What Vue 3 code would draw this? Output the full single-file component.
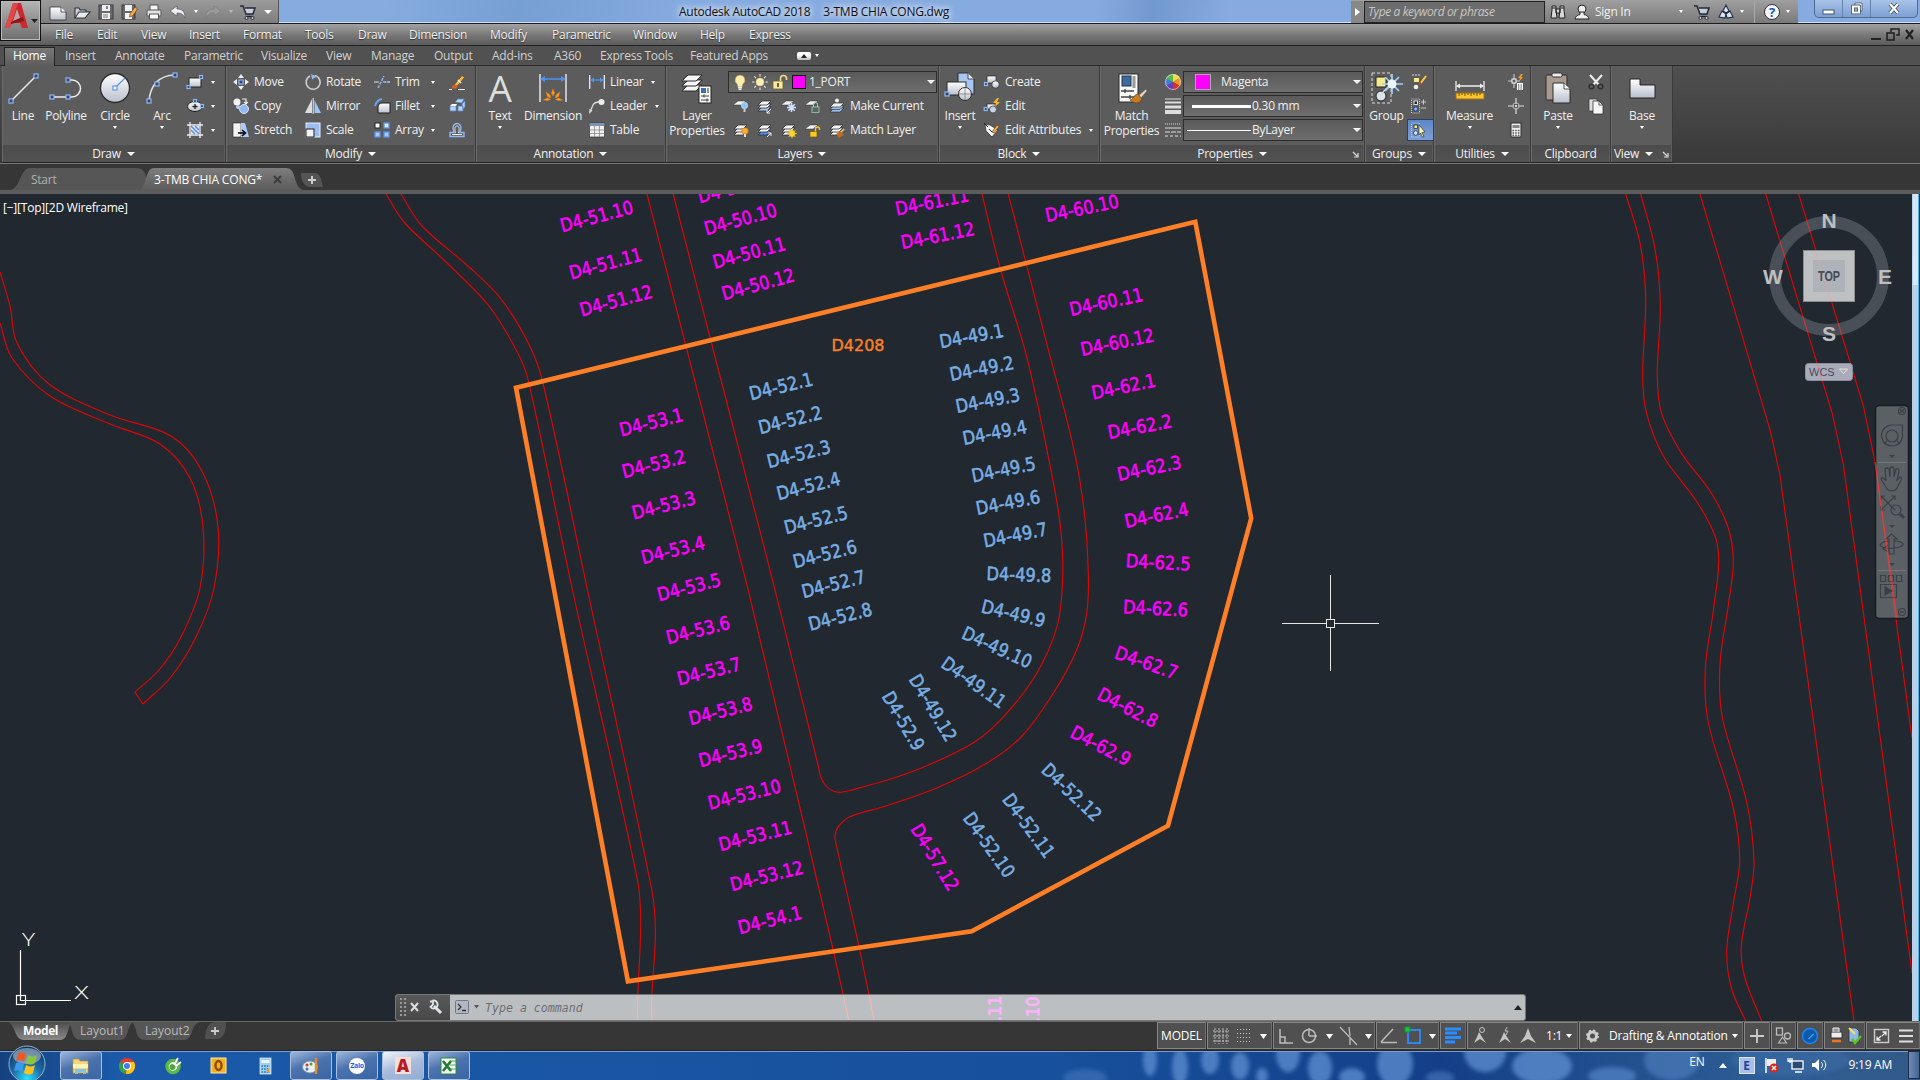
<script setup>
import { h } from 'vue'

const B = '#8fb8f5'
const sq = (x, y, s = 4) =>
  `<rect x="${x - s / 2}" y="${y - s / 2}" width="${s}" height="${s}" fill="#33456b" stroke="${B}" stroke-width="1.2"/>`
const stack = (c = '#f4f4f4', d = '#f4f4f4') =>
  [9, 6, 3].map((y, i) => `<path d="M1 ${y + 4}l4-4h9l-4 4z" fill="${i ? c : d}" stroke="#333" stroke-width=".8"/>`).join('')
const sheet = '<path d="M0 7l5-4h8l-5 4z" fill="#f2f2f2" stroke="#333" stroke-width=".5"/>'

const icons = {
  line: `<path d="M4 29L29 4" stroke="#eee" stroke-width="1.5"/>${sq(4, 29)}${sq(29, 4)}`,
  polyline: `<path d="M2 25H22a8.500 8.500 0 0 0 0-17h-4" fill="none" stroke="#eee" stroke-width="1.5"/>${sq(2, 25)}${sq(18, 25)}${sq(18, 8)}`,
  circle: `<circle cx="16" cy="16" r="14.500" fill="url(#gBall)" stroke="#2c2c2c" stroke-width="1.3"/><path d="M16 16L26 6" stroke="#5a94ee" stroke-width="1.3"/><rect x="14" y="14" width="4" height="4" fill="#fff" stroke="#5a94ee" stroke-width="1.2"/>`,
  arc: `<path d="M3 29C4 14 13 3 29 3" fill="none" stroke="#ddd" stroke-width="1.6"/>${sq(3, 29)}${sq(11, 12)}${sq(29, 3)}`,
  rect: `<rect x="2" y="4" width="12" height="9" fill="url(#gBall)" stroke="#222"/>${sq(14, 3, 3)}${sq(1.5, 13, 3)}`,
  ellipse: `<ellipse cx="8" cy="8.500" rx="7.500" ry="5" fill="url(#gBall)" stroke="#222"/><path d="M8 6v5M5.500 8.500h5" stroke="#222" stroke-width="1.300"/>${sq(8, 3, 3)}${sq(15, 8, 3)}`,
  hatch: `<path d="M3 0v16M13 0v16M0 3h16M0 13h16" stroke="#eee" stroke-width="1.300"/><rect x="4" y="4" width="8" height="8" fill="#dfe8fa"/><path d="M4 8l4 4M4 4l8 8M8 4l4 4" stroke="#5b8be0" stroke-width="1.500"/>`,
  move: `<path d="M8 0l3 4H5zM8 16l3-4H5zM0 8l4-3v6zM16 8l-4-3v6z" fill="#eee"/>${sq(8, 8, 4)}`,
  rotate: `<path d="M10 1.500A7 7 0 1 1 5 2" fill="none" stroke="#ccc" stroke-width="1.600"/><path d="M6 0l6 2.500-5 3z" fill="${B}"/>`,
  trim: `<path d="M0 8h5M11 8h1.500M14 8h2" stroke="#ddd" stroke-width="1.200"/><path d="M4 14L10 2M9 8h7" stroke="${B}" stroke-width="1.400" stroke-dasharray="3 1"/>`,
  erase: `<path d="M5 11L13 1.500l2.500 2L8.500 12z" fill="#f2b645" stroke="#5a3c10" stroke-width=".6"/><path d="M9 6l3 3" stroke="#fff" stroke-width="1.500"/><path d="M3 14c0-3 2-4 4-3l1.500 1.500C8 15 5 15 3 14z" fill="#e05a22"/><path d="M0 15.500h3M9 15.500h7" stroke="#eee"/>`,
  copy: `<circle cx="4" cy="4" r="3.500" fill="#f2f2f2"/><circle cx="11" cy="11" r="4.500" fill="${B}" stroke="#dbe7fb"/><path d="M9 1h4v4M11 4l2 2 2-2" fill="none" stroke="#eee" stroke-width="1.200"/><circle cx="5" cy="9" r="2" fill="#b9cdf0"/>`,
  mirror: `<path d="M7 1v14H0z" fill="#ddd"/><path d="M9.500 2v13H16z" fill="#9fc2f7"/><path d="M8.200 0v16" stroke="#eee" stroke-width="1"/>`,
  fillet: `<path d="M4 15V9c0-3 2-4 4-4h8v10z" fill="url(#gBall)" stroke="#222"/><path d="M1 8c1-4 3-6 7-7" fill="none" stroke="#6ba1f2" stroke-width="2"/>`,
  explode: `<path d="M1 8h6v5H1zM9 8h5v5H9zM6 4l3-3h6l-2 4zM13 6l3-3v6l-2 2z" fill="#b9d3f5" stroke="#5c86c4" stroke-width=".8"/><path d="M1 8l2-2h5L7 8z" fill="#fff"/>`,
  stretch: `<path d="M0 1h8v14H0z" fill="#f5f5f5" stroke="#222" stroke-width=".6"/><path d="M8 1h4l4 14H8z" fill="#a9cbf7"/><path d="M5 11h6M9 8l3.500 3L9 14" fill="none" stroke="#000" stroke-width="1.500"/>`,
  scale: `<rect x="1" y="1" width="14" height="14" fill="#9dbdf0" stroke="#e6eefc"/><rect x="1" y="7" width="8" height="8" fill="#f2f2f2" stroke="#222"/>`,
  array: `<rect x="1" y="1" width="5" height="5" fill="#fff" stroke="#222"/><rect x="10" y="1" width="5" height="5" fill="#dfeaff" stroke="#5a94ee" stroke-width="1.300"/><rect x="1" y="10" width="5" height="5" fill="#a9c8f7" stroke="#5a94ee" stroke-width="1.300"/><rect x="10" y="10" width="5" height="5" fill="#a9c8f7" stroke="#5a94ee" stroke-width="1.300"/>`,
  offset: `<path d="M1 14.500h14v-4h-4c2-4 1-9-3-9s-5 5-3 9H1z" fill="none" stroke="#8fb8f5" stroke-width="1.400"/><path d="M3 12.500h10M6.500 11C5.500 8 5.500 4 8 4s2.500 4 1.500 7" fill="none" stroke="#eee"/>`,
  dimension: `<path d="M3 2v28M29 2v28" stroke="#eee" stroke-width="1.400"/><path d="M4 7h24" stroke="#4f90f0" stroke-width="1.600"/><path d="M3 7l5-3v6zM29 7l-5-3v6z" fill="#4f90f0"/><path d="M16 17l1.500 4-1.500 3-1.500-3zM9 20l4 3 .5 3-3-1.500zM23 20l-4 3-.5 3 3-1.500zM6.500 28l4-2 3 1.500-3 1zM25.500 28l-4-2-3 1.500 3 1z" fill="#f7a823" stroke="#e2761b" stroke-width=".7"/>`,
  linear: `<path d="M.7 1v14M15.300 1v14" stroke="#eee" stroke-width="1.300"/><path d="M2 6h12" stroke="#4f90f0" stroke-width="1.300"/><path d="M1 6l4-2.500v5zM15 6l-4-2.500v5z" fill="#4f90f0"/>`,
  leader: `<path d="M1 14L4 7c1-2 3-3 6-3" fill="none" stroke="#ddd" stroke-width="1.300"/><path d="M0 16l.5-5 3 1.500z" fill="#ddd"/><circle cx="12.500" cy="4" r="3" fill="#eee"/>`,
  table: `<rect x=".5" y="1" width="15" height="14" fill="#f0f0f0" stroke="#333" stroke-width=".7"/><path d="M.5 1h15v3H.5z" fill="#7f93b4"/><path d="M.5 8h15M.5 11.500h15M5.500 4v11M10.500 4v11" stroke="#8a8a8a" stroke-width=".8"/>`,
  layerprops: `${[14, 9, 4].map((y) => `<path d="M1 ${y + 5}l6-6h14l-6 6z" fill="#f6f6f6" stroke="#2c2c2c"/>`).join('')}<rect x="18" y="14" width="12" height="17" fill="#fafafa" stroke="#222"/><rect x="20" y="16" width="5" height="5" fill="#3f6db3"/><path d="M27 16v5M20 24h8M20 28h8M23 22.500v3M26 26.500v3" stroke="#444" stroke-width="1.100"/>`,
  la1: `${sheet}<circle cx="11.500" cy="7.500" r="3.200" fill="#8ec3fa" stroke="#d9ecff" stroke-width=".6"/><path d="M11.500 11v3" stroke="#ccc" stroke-width="2"/>`,
  la2: `${stack('#f4f4f4', '#9cc2f5')}<path d="M14 11l-4 4M10 12v3h3" stroke="#eee" fill="none"/>`,
  la3: `${sheet}<path d="M10.500 5v9M6 9.500h9M7.300 6.300l6.400 6.400M13.700 6.300l-6.400 6.400" stroke="#cfe2fd" stroke-width="1.600"/>`,
  la4: `${sheet}<rect x="7" y="9" width="7" height="5.500" fill="#52695f" stroke="#a9c9ba" stroke-width=".8"/><path d="M8.500 9V6.500a2 2 0 0 1 4 0V9" fill="none" stroke="#a9c9ba"/>`,
  la5: `${[10, 7.500, 5].map((y, i) => `<path d="M1 ${y + 4}l4-4h10l-4 4z" fill="${i > 1 ? '#f0f0f0' : '#9cc2f5'}" stroke="#333" stroke-width=".7"/>`).join('')}<circle cx="8" cy="2.500" r="2" fill="#eee"/>`,
  lb1: `${stack()}<circle cx="12" cy="9" r="3.200" fill="#f9b233" stroke="#e0761a" stroke-width=".8"/><path d="M12 12v3" stroke="#ddd" stroke-width="2"/>`,
  lb2: `${stack('#f4f4f4', '#4f8df0')}<path d="M10 15l4-4M11 11h3v3" stroke="#eee" fill="none"/>`,
  lb3: `${stack()}<circle cx="11" cy="11.500" r="3" fill="#ffe23a" stroke="#e9b61c"/><path d="M11 6.500v10M6 11.500h10M7.500 8l7 7M14.500 8l-7 7" stroke="#f7d327" stroke-width=".8"/>`,
  lb4: `${sheet}<rect x="5" y="9.500" width="7" height="5.500" fill="#f9c723" stroke="#6b5108" stroke-width=".6"/><path d="M10.500 9.500V7a2 2 0 0 1 4 0v1" fill="none" stroke="#f9c723" stroke-width="1.400"/>`,
  lb5: `${stack()}<path d="M7 12l5-3 3 4-5 3z" fill="#c26a1d"/><path d="M12 10l3-3" stroke="#f4d28a" stroke-width="1.500"/>`,
  bulb: `<path d="M8 1a5 5 0 0 1 3 9l-.7 3H5.700L5 10a5 5 0 0 1 3-9z" fill="#fdeeb0" stroke="#8f7d3a" stroke-width=".6"/><path d="M6 13.500h4M6.500 15.300h3" stroke="#eee" stroke-width="1.400"/>`,
  sun: `<circle cx="8" cy="8" r="4" fill="#fff1b5" stroke="#c9b877" stroke-width=".6"/><path d="M8 0v2.500M8 13.500V16M0 8h2.500M13.500 8H16M2.300 2.300L4 4M12 12l1.700 1.700M2.300 13.700L4 12M12 4l1.700-1.700" stroke="#ddd" stroke-width="1.200"/>`,
  unlock: `<rect x="1" y="7" width="10" height="8" fill="#fbe9a0" stroke="#6e6132" stroke-width=".8"/><path d="M8.500 7V4.500a3 3 0 0 1 6 0V6" fill="none" stroke="#f4dd92" stroke-width="1.500"/><path d="M6 9v4" stroke="#333" stroke-width="1.500"/>`,
  insert: `<path d="M14 1h10l6 6v15H14z" fill="#a9c6f2" stroke="#2b2b2b"/><path d="M24 1v6h6" fill="#e8f0fd" stroke="#2b2b2b" stroke-width=".8"/><rect x="3" y="10" width="19" height="13" fill="url(#gBall)" stroke="#2b2b2b"/><circle cx="21" cy="22" r="6.500" fill="url(#gBall)" stroke="#2b2b2b"/><path d="M21 15v13M15 22h12" stroke="#777" stroke-width=".7"/>${sq(3, 22, 4)}`,
  bcreate: `<rect x="3" y="2" width="9" height="7" fill="url(#gBall)" stroke="#222" stroke-width=".7"/><circle cx="11.500" cy="10.500" r="3.700" fill="url(#gBall)" stroke="#333" stroke-width=".8"/>${sq(2, 10, 3)}`,
  bedit: `<rect x="3" y="6" width="8" height="5" fill="url(#gBall)" stroke="#222" stroke-width=".7"/><circle cx="9" cy="11.500" r="3.500" fill="#c6d2e6" stroke="#444" stroke-width=".8"/><path d="M13 0l-4 5h3l-1 4 5-5h-3l2-4z" fill="#f9b42a"/>${sq(1.700, 11, 3)}`,
  battr: `<path d="M1 2l5 1 8 5-6 7-6-6z" fill="#f4f4f4" stroke="#333" stroke-width=".8"/><path d="M5 7l3 3M0 1l4 4" stroke="#222"/><path d="M8 10l5-7 2 1.500-5 6.500z" fill="#f3b04c" stroke="#7b3c12" stroke-width=".7"/>`,
  matchprops: `<rect x="3" y="2" width="19" height="28" fill="#f8f8f8" stroke="#2a2a2a"/><rect x="6" y="4" width="9" height="10" fill="#3c6a9e" stroke="#1e3553"/><path d="M18 4v12" stroke="#9a9a9a" stroke-width="3"/><path d="M5 19h13M5 25h13M9 17v4M14 23v4" stroke="#444" stroke-width="1.400"/><path d="M14 28c4-1 3-5 8-6l4 5c-2 5-8 5-12 1z" fill="#c67c25" stroke="#6d3d0d" stroke-width=".7"/><path d="M23 23l7-6 1 2-6 7z" fill="#e9d6b8" stroke="#555" stroke-width=".6"/>`,
  wheel: `<path d="M8 8V0a8 8 0 0 1 7 4z" fill="#f1e03c"/><path d="M8 8l7-4a8 8 0 0 1 0 8z" fill="#f0912b"/><path d="M8 8l7 4a8 8 0 0 1-7 4z" fill="#d92c2c"/><path d="M8 8v8a8 8 0 0 1-7-4z" fill="#6a3bb5"/><path d="M8 8l-7 4a8 8 0 0 1 0-8z" fill="#3f7be0"/><path d="M8 8L1 4a8 8 0 0 1 7-4z" fill="#58b84a"/><circle cx="8" cy="8" r="7.500" fill="none" stroke="#ddd" stroke-width=".7"/>`,
  weights: `<path d="M0 1h16" stroke="#ddd"/><path d="M0 4.500h16" stroke="#ddd" stroke-width="2"/><path d="M0 9h16" stroke="#ddd" stroke-width="3"/><path d="M0 14h16" stroke="#ddd" stroke-width="4"/>`,
  types: `<path d="M0 2h16" stroke="#ddd" stroke-dasharray="1 1"/><path d="M0 6h16" stroke="#ddd"/><path d="M0 10h16" stroke="#ddd" stroke-dasharray="5 1"/><path d="M0 14h16" stroke="#ddd" stroke-dasharray="3 2"/>`,
  group: `<path d="M1 1h19v30H1z" fill="none" stroke="#ddd" stroke-dasharray="3 2"/><rect x="5" y="5" width="10" height="10" fill="#f6ea8c" stroke="#222"/><circle cx="10" cy="24" r="5" fill="#dbe5e8" stroke="#222"/><path d="M12 20L20 12" stroke="#c9e2fb" stroke-width="1.300"/><path d="M21 2v20M11 12h21M14 5l14 14M28 5L14 19" stroke="#9fd2ff" stroke-width="1.700"/><circle cx="21" cy="12" r="4.500" fill="#eaf6ff"/>`,
  g1: `<path d="M1 1h9" stroke="#ddd" stroke-dasharray="2 1"/><rect x="3" y="4" width="5" height="4" fill="#f6ea8c"/><circle cx="5" cy="13" r="2.300" fill="#eee"/><path d="M9 10l6-8" stroke="#f4cf3a" stroke-width="2"/><path d="M8.500 10.500l1.500-2" stroke="#d33" stroke-width="2"/>`,
  g2: `<path d="M.5 1h8v14h-8z" fill="none" stroke="#ccc" stroke-dasharray="1 1"/><rect x="3" y="3" width="3.500" height="3.500" fill="#222" stroke="#ddd"/><circle cx="4.700" cy="11" r="2.200" fill="#7fb0f5" stroke="#22407a"/><path d="M10 4h5M12.500 1.500v5M10 10h5" stroke="#ccc"/>`,
  g3: `<path d="M.5 1h8v14h-8z" fill="none" stroke="#9fd0ff" stroke-dasharray="1 1"/><rect x="3" y="3" width="3.500" height="3.500" fill="#f6ea8c" stroke="#222" stroke-width=".7"/><circle cx="4.700" cy="11" r="2.200" fill="#dde6ee" stroke="#222" stroke-width=".7"/><path d="M8 3l6 7-3 .5 2 4-1.500.7L9.500 11 8 13z" fill="#fff6a8" stroke="#333" stroke-width=".7"/>`,
  measure: `<path d="M2 9v10M30 9v10M3 14h26" stroke="#eee" stroke-width="1.300"/><path d="M2 14l4-2.500v5zM30 14l-4-2.500v5z" fill="#eee"/><rect x="2" y="21" width="28" height="6" fill="#f7c52d" stroke="#a76f13"/><path d="M5 21v3M8 21v2M11 21v3M14 21v2M17 21v3M20 21v2M23 21v3M26 21v2" stroke="#7a4e0b"/>`,
  u1: `<path d="M6 0v14M0 7h12" stroke="#ccc" stroke-width="1.100"/><rect x="4" y="5" width="4" height="4" fill="#5b5b5b" stroke="#fff"/><path d="M13 0l-3 4h2l-1 4 4-5h-2l2-3z" fill="#f59a28"/><rect x="9" y="9" width="6" height="7" fill="#fff"/><path d="M10 11h4M10 13h4M10 15h4" stroke="#444" stroke-dasharray="1 .6"/>`,
  u2: `<path d="M8 0v6M8 10v6M0 8h6M10 8h6" stroke="#ddd" stroke-width="1.200"/><circle cx="8" cy="8" r="3.200" fill="none" stroke="#bbb"/><circle cx="8" cy="8" r="1" fill="#fff"/>`,
  u3: `<rect x="3" y="1" width="10" height="14" fill="#efefef" stroke="#2a2a2a"/><rect x="4.500" y="3" width="7" height="3" fill="#888"/><path d="M4.500 8.500h7M4.500 11h7M4.500 13.300h7" stroke="#555" stroke-width="1.300" stroke-dasharray="1.500 1.200"/>`,
  paste: `<rect x="4" y="3" width="21" height="25" rx="1.500" fill="#a89a90" stroke="#2a2a2a"/><rect x="10" y="1" width="10" height="4" rx="1.500" fill="#eee" stroke="#333"/><path d="M11 11h11l6 6v14H11z" fill="url(#gBall)" stroke="#2a2a2a"/><path d="M22 11v6h6" fill="#fff" stroke="#2a2a2a" stroke-width=".8"/>`,
  cut: `<path d="M2 1l9 10M14 1L5 11" stroke="#eee" stroke-width="2"/><circle cx="3.500" cy="12.500" r="2.300" fill="none" stroke="#2e2e2e" stroke-width="1.500"/><circle cx="12.500" cy="12.500" r="2.300" fill="none" stroke="#2e2e2e" stroke-width="1.500"/>`,
  copyclip: `<path d="M1 1h8v12H1z" fill="#ddd" stroke="#333" stroke-width=".7"/><path d="M5 3h6l4 4v9H5z" fill="#f7f7f7" stroke="#333" stroke-width=".8"/><path d="M11 3v4h4" fill="none" stroke="#333" stroke-width=".8"/>`,
  base: `<path d="M4 7h10v6h15v13H4z" fill="url(#gBall)" stroke="#222"/>`,
  qnew: `<path d="M0 3h11l5 5v8H0z" fill="url(#gBall)" stroke="#333" stroke-width=".8"/><path d="M11 3v5h5" fill="#fff" stroke="#333" stroke-width=".8"/>`,
  qopen: `<path d="M1 14V4h4l1 2h6v2" fill="#c9ced6" stroke="#333" stroke-width="1.100"/><path d="M1 14l4-6h11l-5 6z" fill="#e8edf5" stroke="#333" stroke-width="1.100"/>`,
  qsave: `<rect x="1" y="1" width="14" height="14" fill="#66686c" stroke="#3b3d42"/><rect x="4" y="1" width="8" height="6" fill="#eef0f3"/><rect x="4" y="9" width="8" height="6" fill="#f2f2f2"/><path d="M9 2v3" stroke="#555" stroke-width="1.400"/><path d="M5 11h5M5 13h5" stroke="#777"/>`,
  qsaveas: `<rect x="0" y="1" width="13" height="14" fill="#66686c" stroke="#3b3d42"/><rect x="3" y="1" width="7" height="6" fill="#eef0f3"/><rect x="3" y="9" width="7" height="6" fill="#f2f2f2"/><path d="M8 10l5-7 2.500 2-5 7-3 1z" fill="#f3b04c" stroke="#7b3c12" stroke-width=".7"/>`,
  qprint: `<rect x="4" y="1" width="8" height="6" fill="#f5f5f5" stroke="#555"/><rect x="1" y="6" width="14" height="6" rx="1" fill="#e4e4e4" stroke="#555"/><rect x="3.500" y="10" width="9" height="5" fill="#fff" stroke="#555"/>`,
  undo: `<path d="M0 7l7-5v3c5 0 8 2 8 9-2-4-4-5-8-5v3z" fill="#eceff4" stroke="#555" stroke-width=".7"/>`,
  redo: `<path d="M16 7L9 2v3c-5 0-8 2-8 9 2-4 4-5 8-5v3z" fill="#999" stroke="#7d7d7d" stroke-width=".7"/>`,
  cart: `<path d="M0 2h3l3 8h7l2-6H5" fill="#c8cdd6" stroke="#23293a" stroke-width="1.500"/><path d="M6 12.500h7" stroke="#23293a" stroke-width="1.300"/><circle cx="6.500" cy="14" r="1.500" fill="#ddd" stroke="#23293a"/><circle cx="12.500" cy="14" r="1.500" fill="#ddd" stroke="#23293a"/>`,
  binoc: `<path d="M2 2h4v4l1 8H1L2 6zM10 2h4v4l1 8H9l1-8zM6 5h4v4H6z" fill="#d7d7d7" stroke="#222"/><path d="M2 4h4M10 4h4" stroke="#222"/>`,
  user: `<circle cx="8" cy="5" r="4" fill="#eee" stroke="#222"/><path d="M1 15c1-4 4-4 5-4.500V8h4v2.500c1 .5 4 .5 5 4.500z" fill="#eee" stroke="#222"/>`,
  share: `<path d="M8 1l3 6-3 2-3-2zM1 13l3-6 4 3-1 4zM15 13l-3-6-4 3 1 4z" fill="#dde3ec" stroke="#1f2b4b" stroke-width="1.100"/>`
}

const Icon = (p) =>
  h('svg', { width: p.s || 16, height: p.s || 16, viewBox: `0 0 ${p.s || 16} ${p.s || 16}`, innerHTML: icons[p.n] || '' })
Icon.props = ['n', 's']

const menus = [['File', 42], ['Edit', 44], ['View', 48], ['Insert', 54], ['Format', 62], ['Tools', 53], ['Draw', 51], ['Dimension', 81], ['Modify', 62], ['Parametric', 81], ['Window', 67], ['Help', 49], ['Express', 60]]
const tabs = [['Insert', 50], ['Annotate', 69], ['Parametric', 77], ['Visualize', 65], ['View', 45], ['Manage', 63], ['Output', 58], ['Add-ins', 62], ['A360', 46], ['Express Tools', 90], ['Featured Apps', 107]]

const panels = [
  { t: 'Draw', w: 224, a: 1, big: [{ i: 'line', l: 'Line', w: 42 }, { i: 'polyline', l: 'Polyline', w: 44 }, { i: 'circle', l: 'Circle', w: 54, a: 1 }, { i: 'arc', l: 'Arc', w: 40, a: 1 }], pad: 5, cols: [{ w: 36, rows: [{ i: 'rect', a: 1 }, { i: 'ellipse', a: 1 }, { i: 'hatch', a: 1 }] }] },
  { t: 'Modify', w: 250, a: 1, pad: 7, cols: [{ w: 72, rows: [{ i: 'move', l: 'Move' }, { i: 'copy', l: 'Copy' }, { i: 'stretch', l: 'Stretch' }] }, { w: 69, rows: [{ i: 'rotate', l: 'Rotate' }, { i: 'mirror', l: 'Mirror' }, { i: 'scale', l: 'Scale' }] }, { w: 75, fix: 1, rows: [{ i: 'trim', l: 'Trim', a: 1 }, { i: 'fillet', l: 'Fillet', a: 1 }, { i: 'array', l: 'Array', a: 1 }] }, { w: 18, rows: [{ i: 'erase' }, { i: 'explode' }, { i: 'offset' }] }] },
  { t: 'Annotation', w: 190, a: 1, big: [{ i: 'A', l: 'Text', w: 48, a: 1 }, { i: 'dimension', l: 'Dimension', w: 58 }], pad: 7, cols: [{ w: 76, rows: [{ i: 'linear', l: 'Linear', a: 1 }, { i: 'leader', l: 'Leader', a: 1 }, { i: 'table', l: 'Table' }] }] },
  { t: 'Layers', w: 273, a: 1, big: [{ i: 'layerprops', l: 'Layer', l2: 'Properties', w: 62 }], layers: 1 },
  { t: 'Block', w: 161, a: 1, big: [{ i: 'insert', l: 'Insert', w: 42, a: 1 }], pad: 3, cols: [{ w: 110, rows: [{ i: 'bcreate', l: 'Create' }, { i: 'bedit', l: 'Edit' }, { i: 'battr', l: 'Edit Attributes', a: 1 }] }] },
  { t: 'Properties', w: 265, a: 1, d: 1, big: [{ i: 'matchprops', l: 'Match', l2: 'Properties', w: 63 }], props: 1 },
  { t: 'Groups', w: 69, a: 1, big: [{ i: 'group', l: 'Group', w: 43 }], pad: 3, cols: [{ w: 22, rows: [{ i: 'g1' }, { i: 'g2' }, { i: 'g3', on: 1 }] }] },
  { t: 'Utilities', w: 97, a: 1, big: [{ i: 'measure', l: 'Measure', w: 71, a: 1 }], pad: 3, cols: [{ w: 20, rows: [{ i: 'u1' }, { i: 'u2' }, { i: 'u3' }] }] },
  { t: 'Clipboard', w: 80, big: [{ i: 'paste', l: 'Paste', w: 54, a: 1 }], pad: 3, cols: [{ w: 20, rows: [{ i: 'cut' }, { i: 'copyclip' }, {}] }] },
  { t: 'View', w: 62, a: 1, d: 1, big: [{ i: 'base', l: 'Base', w: 62, a: 1 }] }
]
const layerRows = [
  { icons: ['la1', 'la2', 'la3', 'la4', 'la5'], l: 'Make Current' },
  { icons: ['lb1', 'lb2', 'lb3', 'lb4', 'lb5'], l: 'Match Layer' }
]

const M = '#ff00ff'
const S = '#79aee3'
const row = (color, list) => list.map(([t, x, y, a]) => ({ t, x, y, a, color, len: t.length > 7 ? 74.500 : 65 }))
const labels = [
  ...row(M, [
    ['D4-51.10', 564.3, 231.7, -15], ['D4-51.11', 573.2, 279, -15], ['D4-51.12', 583.6, 316, -15],
    ['D4-50.9', 701.8, 202.7, -15], ['D4-50.10', 708.2, 234.7, -15], ['D4-50.11', 716.8, 268.3, -15], ['D4-50.12', 725.7, 299.7, -15],
    ['D4-61.11', 898.7, 215, -11], ['D4-61.12', 904.3, 248.7, -11], ['D4-60.10', 1048.7, 221.7, -11.5], ['D4-60.11', 1073, 315.7, -12], ['D4-60.12', 1084, 355.7, -11.5],
    ['D4-62.1', 1095, 399, -11.5], ['D4-62.2', 1111, 438.7, -10.5], ['D4-62.3', 1120.7, 480.7, -11.5], ['D4-62.4', 1128, 527.7, -11.5],
    ['D4-62.5', 1127.5, 567.3, 3], ['D4-62.6', 1124.8, 613.3, 3], ['D4-62.7', 1115.5, 658.7, 19.3], ['D4-62.8', 1097.7, 699.3, 27.5], ['D4-62.9', 1070.7, 737.3, 27.5],
    ['D4-53.1', 623.2, 436, -14], ['D4-53.2', 625.7, 477.7, -14], ['D4-53.3', 635.7, 519, -14], ['D4-53.4', 645, 563.7, -14], ['D4-53.5', 661, 600.7, -14],
    ['D4-53.6', 670, 643.7, -14], ['D4-53.7', 681, 685, -14], ['D4-53.8', 692.5, 724.7, -14], ['D4-53.9', 702.5, 766.7, -14], ['D4-53.10', 711.8, 809.3, -14],
    ['D4-53.11', 722.5, 850.7, -14], ['D4-53.12', 734, 890.7, -14], ['D4-54.1', 741.8, 933.7, -14], ['D4-57.12', 911, 830.7, 58.5],
    ['D4-57.11', 1001, 1068, -90], ['D4-57.10', 1039, 1069, -90]
  ]),
  ...row(S, [
    ['D4-49.1', 942.7, 348, -10.5], ['D4-49.2', 953, 380.7, -11], ['D4-49.3', 959, 412.7, -11], ['D4-49.4', 966, 444.7, -11], ['D4-49.5', 975, 482, -11.5],
    ['D4-49.6', 979.3, 514.7, -11], ['D4-49.7', 986.7, 547, -11], ['D4-49.8', 988.2, 580, 2], ['D4-49.9', 982.3, 612.7, 13.5], ['D4-49.10', 962.3, 638.7, 24.5],
    ['D4-49.11', 941.3, 667.3, 35.3], ['D4-49.12', 909.3, 681, 59], ['D4-52.9', 882.3, 698, 59.5], ['D4-52.12', 1041.7, 772.7, 43.5], ['D4-52.11', 1002.7, 801, 54], ['D4-52.10', 963.3, 820, 54.5],
    ['D4-52.1', 752.9, 399.7, -13.5], ['D4-52.2', 762.1, 433.7, -14], ['D4-52.3', 770.7, 467.7, -14], ['D4-52.4', 780.4, 499.7, -14], ['D4-52.5', 787.9, 533.7, -14],
    ['D4-52.6', 796.8, 567.7, -14], ['D4-52.7', 805.4, 597.7, -14], ['D4-52.8', 812.1, 630.3, -14]
  ])
]

// Smooth curve through surveyed points, tangents scaled by segment length
const smooth = (p) => {
  const tan = p.map((_, i) => {
    const a = p[Math.max(i - 1, 0)]
    const b = p[Math.min(i + 1, p.length - 1)]
    const d = Math.hypot(b[0] - a[0], b[1] - a[1])
    return [(b[0] - a[0]) / d, (b[1] - a[1]) / d]
  })
  let s = `M${p[0][0]} ${p[0][1]}`
  for (let i = 1; i < p.length; i++) {
    const [a, b] = [p[i - 1], p[i]]
    const l = Math.hypot(b[0] - a[0], b[1] - a[1]) / 3
    s += `C${a[0] + tan[i - 1][0] * l} ${a[1] + tan[i - 1][1] * l} ${b[0] - tan[i][0] * l} ${b[1] - tan[i][1] * l} ${b[0]} ${b[1]}`
  }
  return s
}
const curves = [
  [[673.2, 194], [710.7, 340], [775, 590], [818.5, 767], [820.7, 776.7], [826, 786], [833, 791], [841, 792.3], [850, 790.5], [892.9, 778.3], [928.6, 765], [975, 741.7], [1003.6, 716.7], [1035.7, 675], [1057, 626.7], [1062.7, 576.7], [1060, 523], [1048.3, 456.7], [1026.7, 356.7], [1000.7, 270], [982, 194]],
  [[1008.3, 194], [1025.7, 261.7], [1046.7, 343.3], [1073.3, 446.7], [1084, 510], [1088.3, 573.3], [1086.7, 613.3], [1076.7, 650], [1053.3, 693.3], [1022, 736], [986.7, 763.3], [936.7, 788], [886.7, 805.7], [850, 816.7], [838.3, 826.7], [835, 836.7], [836.7, 846.7], [859, 946.7], [874.3, 1021]],
  [[386, 194], [404, 222], [446, 262], [489, 306], [517.9, 353.3], [528.6, 381.7], [572.5, 590], [637.5, 880], [640.7, 923], [637.9, 993], [637.3, 1021]],
  [[401, 194], [422, 226], [468, 266], [500, 297.7], [526.8, 340], [542, 379], [587.5, 590], [651.8, 890], [655.4, 933], [651.8, 997], [651.8, 1021]],
  [[0, 272], [10, 306], [17, 343], [49, 384], [110, 415], [171, 436], [202, 471], [218, 527], [214, 588], [196, 637], [171, 677], [143, 704]],
  [[0, 323], [12, 358], [50, 396], [110, 424], [160, 444], [190, 478], [203, 527], [200, 588], [181, 637], [159, 670], [135, 692]],
  [[1625.7, 194], [1640, 243], [1645.7, 296.5], [1642.7, 376.4], [1646.7, 413.7], [1663.3, 456], [1696.7, 501.5], [1715, 536], [1718.7, 563], [1713.3, 611], [1705.3, 669], [1708.3, 722.5], [1733.3, 808], [1739.7, 861], [1733.3, 903.5], [1726.7, 951.5], [1731.7, 989], [1745.7, 1021]],
  [[1640.7, 194], [1655, 248.6], [1660.3, 304.5], [1657.3, 376.4], [1661.7, 413.7], [1681.7, 453.6], [1710, 491], [1728.3, 528], [1733.3, 563], [1728.3, 605], [1720, 664], [1722.3, 717], [1746.7, 802], [1754, 861], [1750, 898], [1741.3, 946], [1745, 978], [1761.7, 1021]]
].map(smooth)
const straights = [
  '647,194 685.7,345 748.2,590 803.6,823 833.2,950 849,1021',
  '1700,194 1770,429.6 1780,475 1854,1021',
  '1765.7,194 1832.3,413.7 1843.3,464 1912,973',
  '1798.7,194 1863.3,405.7 1875,461.6 1912,738.5',
  '135,692 143,704'
]
</script>

<template>
  <div class="app">
    <svg class="defs" width="0" height="0">
      <linearGradient id="gBall" x1="0" y1="0" x2="0" y2="1"><stop offset="0" stop-color="#ffffff" /><stop offset="1" stop-color="#b9bfcc" /></linearGradient>
    </svg>

    <div class="appbtn">
      <svg width="38" height="38" viewBox="0 0 38 38">
        <path d="M12 2h8l7 25h-6l-2-5h-8l-3 5H4z" fill="#c8282e" /><path d="M16 8l3 9-7 3z" fill="#b9a5a5" /><path d="M12 2h5L9 27H4z" fill="#e0474b" /><path d="M10 21l12-5 1 4-13 3z" fill="#8f1419" />
        <path d="M30 18h7l-3.500 4z" fill="#222" />
      </svg>
    </div>

    <header class="title">
      <div class="qat">
        <Icon n="qnew" /><Icon n="qopen" /><Icon n="qsave" /><Icon n="qsaveas" /><Icon n="qprint" /><Icon n="undo" /><i class="dn"></i><Icon n="redo" /><i class="dn dim"></i><Icon n="cart" /><i class="dn bar"></i>
      </div>
      <div class="caption"><span>Autodesk AutoCAD 2018</span><span>3-TMB CHIA CONG.dwg</span></div>
      <div class="info">
        <span class="go"></span><span class="search">Type a keyword or phrase</span>
        <Icon n="binoc" class="m1" /><Icon n="user" class="m2" /><span class="sign">Sign In</span><i class="dn"></i>
        <Icon n="cart" class="m3" /><Icon n="share" class="m4" /><i class="dn m5"></i><span class="vsep"></span><span class="help">?</span><i class="dn m5"></i>
      </div>
      <div class="win">
        <span><svg width="14" height="14"><rect x="1" y="8" width="11" height="4" fill="#fff" stroke="#456" /></svg></span>
        <span><svg width="14" height="14"><path d="M5 1h7v8h-2V3H5z" fill="#fff" stroke="#456" stroke-width=".8" /><rect x="3" y="4.500" width="6" height="6" fill="none" stroke="#456" stroke-width="3.500" /><rect x="3" y="4.500" width="6" height="6" fill="none" stroke="#fff" stroke-width="2" /></svg></span>
        <span><svg width="14" height="14"><path d="M3 2l8 9M11 2L3 11" stroke="#456" stroke-width="4" /><path d="M3 2l8 9M11 2L3 11" stroke="#fff" stroke-width="2.200" /></svg></span>
      </div>
    </header>

    <nav class="menu">
      <span v-for="m in menus" :key="m[0]" :style="{ width: m[1] + 'px' }">{{ m[0] }}</span>
      <svg class="mdi" width="48" height="16"><path d="M1 12h10" stroke="#222" stroke-width="2" /><path d="M21 5V2h8v6h-3" fill="none" stroke="#222" stroke-width="1.500" /><rect x="17" y="6" width="7" height="7" fill="none" stroke="#222" stroke-width="1.600" /><path d="M36 3l7 9M43 3l-7 9" stroke="#222" stroke-width="2.200" /></svg>
    </nav>

    <nav class="tabs">
      <span class="home">Home</span>
      <span v-for="m in tabs" :key="m[0]" :style="{ width: m[1] + 'px' }">{{ m[0] }}</span>
      <i class="pill"></i><i class="dn"></i>
    </nav>

    <section class="ribbon">
      <div v-for="p in panels" :key="p.t" class="panel" :style="{ width: p.w + 'px' }">
        <div class="body">
          <div v-for="b in p.big" :key="b.l" class="big" :style="{ width: b.w + 'px' }">
            <span v-if="b.i === 'A'" class="bigA">A</span>
            <Icon v-else :n="b.i" :s="32" />
            <span class="lab">{{ b.l }}</span>
            <span v-if="b.l2" class="lab l2">{{ b.l2 }}</span>
            <i v-if="b.a" class="dn"></i>
          </div>
          <div v-if="p.cols" class="cols" :style="{ marginLeft: p.pad + 'px' }">
            <div v-for="(c, ci) in p.cols" :key="ci" class="col" :class="{ fix: c.fix }" :style="{ width: c.w + 'px' }">
              <div v-for="(r, ri) in c.rows" :key="ri" class="row" :class="{ on: r.on }">
                <Icon v-if="r.i" :n="r.i" /><span v-if="r.l" class="txt">{{ r.l }}</span><i v-if="r.a" class="dn"></i>
              </div>
            </div>
          </div>
          <div v-if="p.layers" class="layers">
            <div class="combo"><Icon n="bulb" /><Icon n="sun" /><Icon n="unlock" /><b class="sw dark"></b><span>1_PORT</span><i class="dn wide"></i></div>
            <div v-for="r in layerRows" :key="r.l" class="lrow"><Icon v-for="n in r.icons" :key="n" :n="n" /><span>{{ r.l }}</span></div>
          </div>
          <div v-if="p.props" class="props">
            <div class="prow"><Icon n="wheel" /><div class="combo"><b class="sw"></b><span class="mg">Magenta</span><i class="dn wide"></i></div></div>
            <div class="prow"><Icon n="weights" /><div class="combo"><b class="thick"></b><span>0.30 mm</span><i class="dn wide"></i></div></div>
            <div class="prow"><Icon n="types" /><div class="combo"><b class="thin"></b><span>ByLayer</span><i class="dn wide"></i></div></div>
          </div>
        </div>
        <div class="ptitle">
          <span>{{ p.t }}</span><i v-if="p.a" class="dn wide"></i>
          <svg v-if="p.d" class="dlg" width="6" height="6"><path d="M0 0l4 4M5 1v4H1" fill="none" stroke="#ddd" stroke-width="1.200" /></svg>
        </div>
      </div>
    </section>

    <div class="docs">
      <svg class="shape" width="340" height="27" viewBox="0 0 340 27">
        <defs><linearGradient id="gTab" x1="0" y1="0" x2="0" y2="1"><stop offset="0" stop-color="#7d7d7d" /><stop offset="1" stop-color="#5a5a5a" /></linearGradient></defs>
        <path d="M10 26C20 26 20 4 30 4H136c8 0 10 6 11 13v9z" fill="#565656" />
        <path d="M136 27C148 27 144 4 154 4H286c9 0 8 12 12 18 3 4 5 4 9 5z" fill="url(#gTab)" />
        <path d="M301 9h13c7 0 7 7 9 14h-12c-8 0-10-8-10-14z" fill="#555" /><path d="M312 12v8M308 16h8" stroke="#ccc" stroke-width="2" />
        <path d="M274 12l7 7M281 12l-7 7" stroke="#3c3c3c" stroke-width="2" />
      </svg>
      <span class="d1">Start</span><span class="d2">3-TMB CHIA CONG*</span>
    </div>

    <main class="canvas">
      <svg class="drawing" width="1912" height="827" viewBox="0 194 1912 827">
        <g class="red"><path v-for="(c, i) in curves" :key="i" :d="c" /><polyline v-for="s in straights" :key="s" :points="s" /></g>
        <polygon class="bound" points="516,387.7 1195.3,221.7 1251.2,518.3 1168,825.7 971.7,931.3 627.9,981.3" />
        <text class="zone" x="831.500" y="351" textLength="53" lengthAdjust="spacingAndGlyphs">D4208</text>
        <g class="lots">
          <text v-for="l in labels" :key="l.t" x="-2" :fill="l.color" :stroke="l.color" :textLength="l.len" lengthAdjust="spacingAndGlyphs" :transform="`translate(${l.x} ${l.y}) rotate(${l.a})`">{{ l.t }}</text>
        </g>
        <path d="M1282 623.500h44M1335 623.500h44M1330.500 575v44M1330.500 628v43" stroke="#e6e6e6" /><rect x="1326.500" y="619.500" width="8" height="8" fill="none" stroke="#e6e6e6" />
        <path d="M20.500 950v50.500H71" fill="none" stroke="#fff" stroke-width="1.200" /><rect x="16.500" y="995.500" width="9" height="9" fill="none" stroke="#fff" stroke-width="1.200" />
        <text class="ucs" x="22" y="946" textLength="13" lengthAdjust="spacingAndGlyphs">Y</text><text class="ucs" x="74.500" y="999" textLength="14" lengthAdjust="spacingAndGlyphs">X</text>
        <text class="vp" x="3" y="212" textLength="125">[−][Top][2D Wireframe]</text>
        <g class="cube">
          <circle cx="1829" cy="276" r="54" fill="none" stroke="#9aa0a6" stroke-opacity=".33" stroke-width="12" />
          <rect x="1803.500" y="250.500" width="51" height="51" fill="#c9cacb" fill-opacity=".94" stroke="#8b8d8f" /><rect x="1813" y="260" width="32" height="32" fill="#aeb2b9" />
          <path d="M1815.500 251l15.300 50" stroke="#f0a0a0" opacity=".5" />
          <text class="top" x="1829" y="281" textLength="22" lengthAdjust="spacingAndGlyphs">TOP</text>
          <text x="1829" y="228">N</text><text x="1829" y="341">S</text><text x="1773" y="284">W</text><text x="1885" y="284">E</text>
        </g>
        <rect x="1805.500" y="363.500" width="47" height="17" rx="3" fill="#a9abba" stroke="#8d8fa0" /><text class="wcs" x="1809" y="376">WCS</text><path d="M1839.500 369h8l-4 4.500z" fill="none" stroke="#eee" stroke-width=".8" />
        <path d="M1817 363l5 18" stroke="#f77" opacity=".7" />
        <g class="navbar">
          <rect x="1875.500" y="405.500" width="33" height="213" rx="4" fill="#8b8e90" fill-opacity=".55" stroke="#171c22" stroke-width="1.500" />
          <g fill="none" stroke="#3a4046" stroke-width="1.200">
            <circle cx="1902" cy="411" r="3.500" /><path d="M1900 409l4 4M1904 409l-4 4" /><circle cx="1902" cy="612" r="3.500" /><path d="M1900 612h4" />
            <path d="M1892 425h10.500v11a10.500 10.500 0 1 1-10.500-11z" /><circle cx="1892" cy="436" r="6" /><path d="M1887 441l-3 3M1897 441l3 3" />
            <path d="M1886 487l-5-8c1-2 3-1 5 2l-1-12c2-2 3-1 4 0l1 8v-9c2-2 3-1 4 0v9l2-8c2-1 3 0 3 2l-2 9 3-3c2 0 2 1 1 3l-4 8c-2 4-9 4-11-1z" />
            <path d="M1881 496l14 14M1895 496l-14 14M1881 500v-4h4M1891 496h4v4M1881 506v4h4" /><circle cx="1896" cy="510" r="5" /><path d="M1900 514l4 4" stroke-width="3" />
            <path d="M1889 554v-15h-3l5.500-5 5.500 5h-3v15z" /><path d="M1889 541c-10 1-12 6-3 7 8 1 18-1 17-4-1-2-5-3-9-3" /><path d="M1888 545l-5 4 6 3" />
            <path d="M1880.500 575.500h5v6h-5zM1888.500 575.500h5v6h-5zM1896.500 575.500h5v6h-5zM1880.500 584.500h16v13h-16z" /><path d="M1885 587v8l7-4z" fill="#3a4046" />
          </g>
          <path d="M1878 462.500h28M1878 570.500h28" stroke="#73777a" />
          <path d="M1889 455h6l-3 3zM1889 525h6l-3 3zM1889 563h6l-3 3z" fill="#3a4046" />
        </g>
        <path d="M1875 462l22 156" stroke="#f33" stroke-width="1.200" fill="none" opacity=".75" />
      </svg>
      <div class="edge"></div>
      <div class="cmd">
        <div class="grip">
          <svg width="54" height="27"><path d="M5 4v18M9 4v18" stroke="#999" stroke-width="2" stroke-dasharray="2 2" /><path d="M15 9l7 8M22 9l-7 8" stroke="#ddd" stroke-width="2" /><path d="M38 12l7 7" stroke="#dfe3ea" stroke-width="3" /><path d="M34 7.500l3 0 0 3-2.500 2.500a4 4 0 1 0 2-6.500" fill="none" stroke="#dfe3ea" stroke-width="1.800" /></svg>
        </div>
        <svg width="30" height="27"><rect x="5.500" y="6.500" width="13" height="13" rx="1" fill="#b2b8c2" stroke="#6f7783" /><path d="M8 10l3 3-3 3M12 16.500h4" fill="none" stroke="#333" stroke-width="1.300" /><path d="M24 11h5l-2.500 3.500z" fill="#555" /></svg>
        <span>Type a command</span><i class="up"></i>
      </div>
    </main>

    <footer class="status">
      <div class="lay">
        <svg class="shape" width="240" height="28"><path d="M0 0h8c8 3 6 18 16 18h36c10 0 6-16 14-18z" fill="url(#gMod)" /><path d="M68 0c6 6 2 18 14 18h38c10 0 6-16 14-18z" fill="#565656" /><path d="M132 0c6 6 2 18 14 18h38c10 0 6-16 16-18z" fill="#565656" /><path d="M205 17c0-8 3-17 10-17h11c0 8-2 17-9 17z" fill="#505050" /><path d="M215 5v8M211 9h8" stroke="#ccc" stroke-width="1.800" /><defs><linearGradient id="gMod" x1="0" y1="0" x2="0" y2="1"><stop offset="0" stop-color="#4c4c4c" /><stop offset="1" stop-color="#8a8a8a" /></linearGradient></defs></svg>
        <b>Model</b><span>Layout1</span><span>Layout2</span>
      </div>
      <div class="sb">
        <div class="mod">MODEL</div>
        <div class="w65"><svg width="63" height="26"><path d="M7 5v16M11 5v16M15 5v16M19 5v16M5 8h16M5 13h16M5 18h16" stroke="#bbb" stroke-width="1" stroke-dasharray="2 1" /><path d="M29 6.500h14M29 10.500h14M29 14.500h14M29 18.500h14" stroke="#ccc" stroke-dasharray="1 2" /><path d="M52 11h7l-3.500 5z" fill="#fff" /></svg></div>
        <div class="w103"><svg width="101" height="26"><path d="M6 6v14h13M6 14h5v6" fill="none" stroke="#bbb" stroke-width="1.500" /><circle cx="35" cy="13" r="6.500" fill="none" stroke="#bbb" stroke-width="1.500" /><path d="M35 13V5M35 13h8" stroke="#bbb" stroke-width="1.500" /><path d="M52 11h7l-3.500 5zM91 11h7l-3.500 5z" fill="#fff" /><path d="M66 4l17 18M76 14v8M76 13l-1-9" stroke="#bbb" stroke-width="1.300" fill="none" /></svg></div>
        <div class="w64"><svg width="62" height="26"><path d="M4 19.500h16M4 19L16 6" stroke="#bbb" stroke-width="1.500" /><rect x="31" y="7" width="12" height="13" fill="none" stroke="#2a8cff" stroke-width="1.800" /><rect x="28" y="4" width="5" height="5" fill="#1fbf3a" stroke="#093" stroke-width=".8" /><path d="M52 11h7l-3.500 5z" fill="#fff" /></svg></div>
        <div class="w27"><svg width="24" height="26"><path d="M4 6h16M4 10h12M4 14.500h16M4 19h10" stroke="#2a8cff" stroke-width="3" /></svg></div>
        <div class="w111"><svg width="78" height="26"><g fill="#c4c4c4"><path d="M11 9l3 5 4 6-6-4-6 4 3-6z" /><path d="M36 9l3 5 4 6-6-4-6 4 3-6z" /><path d="M60 5l3 8 5 7-8-4-8 4 5-7z" /></g><circle cx="14" cy="7" r="2.500" fill="none" stroke="#c4c4c4" /><path d="M39 4l-2 4h3l-2 4" stroke="#c4c4c4" fill="none" /></svg><span>1:1</span><i class="dn"></i></div>
        <div class="w165"><svg width="29" height="26"><circle cx="12.500" cy="13" r="4" fill="none" stroke="#ccc" stroke-width="3" /><circle cx="12.500" cy="13" r="5.500" fill="none" stroke="#ccc" stroke-width="2" stroke-dasharray="2.200 2.100" /></svg><span>Drafting &amp; Annotation</span><i class="dn"></i></div>
        <div class="w27"><svg width="24" height="26"><path d="M12 6v14M5 13h14" stroke="#ccc" stroke-width="1.800" /></svg></div>
        <div class="w26"><svg width="23" height="26"><rect x="4.500" y="5" width="6" height="7" fill="none" stroke="#bbb" stroke-width="1.300" /><circle cx="15.500" cy="13" r="3" fill="none" stroke="#bbb" stroke-width="1.300" /><path d="M6.500 20l4-6 4 6z" fill="none" stroke="#bbb" stroke-width="1.200" /></svg></div>
        <div class="w27"><svg width="24" height="26"><circle cx="12" cy="13" r="7.500" fill="#0d58a8" stroke="#1a86f5" stroke-width="1.500" /><path d="M10.500 16l5-5" stroke="#3fa0ff" stroke-width="1.500" /></svg></div>
        <div class="w41"><svg width="39" height="26"><rect x="6" y="9" width="11" height="6" rx="1" fill="#eee" stroke="#333" /><path d="M8 9V5h6v4" fill="#999" stroke="#eee" /><path d="M7 18h9" stroke="#e8742a" stroke-width="2.500" /><path d="M24 5h7l3 3v11H24z" fill="#8fb8e8" stroke="#333" stroke-width=".8" /><path d="M24 5l6 6" stroke="#f6e25a" stroke-width="2" /><path d="M27 16l3 4 6-7" fill="none" stroke="#58c322" stroke-width="2.400" /></svg></div>
        <div class="w52"><svg width="50" height="26"><rect x="7.500" y="6.500" width="14" height="13" fill="none" stroke="#ccc" stroke-width="1.400" /><path d="M10 17l4-4M10 13.500V17h3.500M19 9l-4 4M19 12.500V9h-3.500" stroke="#eee" stroke-width="1.300" fill="none" /><path d="M32 7.500h14M32 13h14M32 18.500h14" stroke="#ddd" stroke-width="2" /></svg></div>
      </div>
    </footer>

    <div class="taskbar">
      <svg class="bg" width="1920" height="30" viewBox="0 1050 1920 30" preserveAspectRatio="none">
        <defs>
          <linearGradient id="tb"><stop offset="0" stop-color="#16427f" /><stop offset=".06" stop-color="#1a5aa8" /><stop offset=".55" stop-color="#17509c" /><stop offset=".75" stop-color="#143f88" /><stop offset=".92" stop-color="#2d5d94" /><stop offset="1" stop-color="#335a88" /></linearGradient>
          <filter id="soft" filterUnits="userSpaceOnUse" x="1000" y="1030" width="920" height="80"><feGaussianBlur stdDeviation="2.200" /></filter>
        </defs>
        <rect y="1050" width="1920" height="30" fill="url(#tb)" />
        <g fill="#5f8fd2" opacity=".75" filter="url(#soft)">
          <ellipse cx="1085" cy="1078" rx="22" ry="9" opacity=".5" /><ellipse cx="1150" cy="1060" rx="7" ry="16" /><ellipse cx="1180" cy="1067" rx="8" ry="18" /><ellipse cx="1210" cy="1060" rx="9" ry="14" /><ellipse cx="1240" cy="1066" rx="9" ry="14" /><ellipse cx="1262" cy="1076" rx="6" ry="8" /><ellipse cx="1288" cy="1054" rx="12" ry="18" /><ellipse cx="1320" cy="1068" rx="12" ry="17" /><ellipse cx="1352" cy="1077" rx="13" ry="9" /><ellipse cx="1395" cy="1064" rx="18" ry="22" /><ellipse cx="1440" cy="1078" rx="14" ry="7" opacity=".6" /><ellipse cx="1485" cy="1052" rx="21" ry="20" /><ellipse cx="1542" cy="1066" rx="30" ry="18" /><ellipse cx="1612" cy="1076" rx="24" ry="9" opacity=".8" /><ellipse cx="1672" cy="1060" rx="28" ry="20" opacity=".6" /><ellipse cx="1790" cy="1060" rx="60" ry="16" opacity=".25" />
        </g>
        <path d="M0 1051.500h1920" stroke="#7d9fc9" /><path d="M0 1050.500h1920" stroke="#1d2632" />
      </svg>
      <svg class="orb" width="56" height="34" viewBox="0 1046 56 34">
        <defs><radialGradient id="orb" cx=".5" cy=".9" r=".9"><stop offset="0" stop-color="#2be0ff" /><stop offset=".45" stop-color="#1f6ca8" /><stop offset="1" stop-color="#0f2f57" /></radialGradient></defs>
        <circle cx="27" cy="1064" r="18" fill="url(#orb)" stroke="#8fb4d2" /><ellipse cx="27" cy="1056" rx="14" ry="8" fill="#fff" opacity=".4" />
        <path d="M18 1054c3-2 5-2 8 0l-2 8c-3-2-5-2-8-1z" fill="#ee5a24" /><path d="M28 1055c3 2 6 2 9 0l-2 8c-3 2-6 2-9 0z" fill="#8cc63f" /><path d="M16 1063c3-1 5-1 8 1l-2 8c-3-2-5-2-8-1z" fill="#3a9be8" /><path d="M26 1065c3 2 6 2 9 0l-2 8c-3 2-6 2-9 0z" fill="#fcc21b" />
      </svg>
      <div class="tbtns">
        <div class="tbn"><svg width="20" height="18"><path d="M2 2h6l1 2h8v12H2z" fill="#f1d67a" stroke="#b2923c" stroke-width=".7" /><path d="M2 7h15v4H2z" fill="#fdf3b5" /><path d="M4 17v-5h11v5h-3v-2H7v2z" fill="#7fc4ea" /></svg></div>
        <div class="plain"><svg width="18" height="18"><circle cx="9" cy="9" r="8" fill="#e33b2e" /><path d="M9 9l-7-4a8 8 0 0 0 6 12z" fill="#2fa24c" /><path d="M9 9l-1 8a8 8 0 0 0 8-12H9z" fill="#fbc516" /><circle cx="9" cy="9" r="4" fill="#fff" /><circle cx="9" cy="9" r="3" fill="#3f7de8" /></svg></div>
        <div class="plain"><svg width="18" height="18"><circle cx="9" cy="9.500" r="6" fill="#fff" stroke="#5cb947" stroke-width="3.500" /><circle cx="8.500" cy="10" r="3" fill="#4ea53a" /><path d="M10 8l4-7M12 9l5-4" stroke="#fff" stroke-width="1.800" /></svg></div>
        <div class="plain"><svg width="18" height="18"><rect x="1" y="1" width="15" height="15" fill="#f7b11c" stroke="#ffe9a6" /><ellipse cx="8.500" cy="8.500" rx="3" ry="4.500" fill="none" stroke="#8c4a00" stroke-width="2.400" /></svg></div>
        <div class="plain"><svg width="18" height="18"><rect x="4" y="1" width="11" height="16" fill="#9fd0f3" stroke="#e4f3ff" stroke-width=".7" /><rect x="5.500" y="3" width="8" height="3" fill="#eaf6ff" /><path d="M5.500 9h8M5.500 12h8M5.500 15h8" stroke="#2c6cae" stroke-width="1.600" stroke-dasharray="1.600 1" /><path d="M12 12v3" stroke="#f90" stroke-width="2" /></svg></div>
        <div class="tbn"><svg width="20" height="18"><ellipse cx="9" cy="10" rx="7.500" ry="6" fill="#e8eef3" stroke="#7d96ad" /><circle cx="6" cy="8" r="1.500" fill="#d33" /><circle cx="10" cy="7" r="1.500" fill="#3a3" /><circle cx="6" cy="12" r="1.500" fill="#37c" /><path d="M15 1v16" stroke="#e58d2d" stroke-width="2.500" /></svg></div>
        <div class="tbn"><span class="zalo">Zalo</span></div>
        <div class="tbn act"><span class="acad">A</span></div>
        <div class="tbn"><svg width="18" height="18"><path d="M1 1h15v16H1z" fill="#f4fbf2" stroke="#2c8a3a" /><path d="M10 4h6M10 8h6M10 12h6" stroke="#4ea95c" /><path d="M3 4l8 10M11 4L3 14" stroke="#207a32" stroke-width="2.600" /></svg></div>
      </div>
      <div class="tray">
        <span class="en">EN</span><i class="up w"></i><span class="ebox">E</span>
        <svg width="18" height="18"><path d="M3 2v15" stroke="#fff" stroke-width="1.500" /><path d="M4 3h9v7H4z" fill="#eee" /><circle cx="11" cy="12" r="4.500" fill="#d8271f" /><path d="M9 10l4 4M13 10l-4 4" stroke="#fff" stroke-width="1.300" /></svg>
        <svg width="18" height="18"><rect x="5" y="5" width="11" height="8" fill="#2a4a70" stroke="#fff" stroke-width="1.300" /><path d="M8 16h7M3 2v5M1 2v3h4V2" stroke="#fff" stroke-width="1.300" fill="none" /></svg>
        <svg width="18" height="18"><path d="M1 7h3l4-4v12l-4-4H1z" fill="#fff" /><path d="M10 6c2 2 2 4 0 6M12.500 4c3 3 3 7 0 10" fill="none" stroke="#fff" /></svg>
        <span class="clock">9:19 AM</span><span class="peek"></span>
      </div>
    </div>
  </div>
</template>

<style>
body { margin: 0; background: #222830; overflow: hidden; }
</style>

<style scoped>
.app { position: relative; width: 1920px; height: 1080px; display: flex; flex-direction: column; font: 12px/16px 'Open Sans', 'Noto Sans', sans-serif; letter-spacing: -0.25px; color: #f0f0f0; overflow: hidden; background: #363636; white-space: nowrap; }
.defs { position: absolute; }
i { font-style: normal; }
svg { flex: none; display: block; overflow: visible; }
.dn { display: inline-block; flex: none; width: 0; height: 0; border: 2.500px solid transparent; border-top: 3px solid #fff; border-bottom: 0; }
.dn.wide { border-width: 4px 4px 0; }
.dn.dim { border-top-color: #bbb; }

.appbtn { position: absolute; z-index: 5; left: 0; top: 0; width: 39px; height: 39px; border: 1px solid #111; background: linear-gradient(#b5b5b5, #8a8a8a 60%, #6e6e6e); box-shadow: inset 0 0 0 1px #bbb; }
.title { height: 24px; flex: none; display: flex; background: linear-gradient(100deg, #86acdf 0 20%, #769fd4 27%, #86abe0 36% 57%, #7299cf 60%, #87abe0 64% 100%); border-bottom: 1px solid #1c1c1c; box-sizing: border-box; box-shadow: inset 0 -1px #cfe0f5; }
.qat { box-sizing: border-box; width: 279px; padding-left: 50px; display: flex; align-items: center; gap: 8px; background: linear-gradient(#9b9b9b, #7e7e7e); border-right: 1px solid #555; }
.qat .dn { margin-right: -1px; }
.qat .bar { border-width: 4px 4px 0; box-shadow: 0 -7px 0 -2px #fff; }
.caption { display: flex; gap: 13px; width: 1072px; padding-left: 400px; box-sizing: border-box; align-items: center; color: #111; text-shadow: 0 0 6px #fff, 0 0 8px #fff; letter-spacing: -0.25px; }
.info { width: 447px; display: flex; align-items: center; background: linear-gradient(#9f9f9f, #7a7a7a); }
.go { width: 12px; height: 22px; background: #888; position: relative; }
.go::after { content: ''; position: absolute; left: 4px; top: 7px; border: 4px solid transparent; border-left: 5px solid #fff; border-right: 0; }
.search { box-sizing: border-box; width: 181px; height: 22px; border: 1px solid #222; background: #6c6c6c; color: #c6c6c6; font-style: italic; line-height: 20px; padding-left: 3px; margin-left: 1px; letter-spacing: -0.4px; }
.m1 { margin-left: 5px; }
.m2 { margin-left: 8px; }
.sign { width: 84px; margin-left: 5px; }
.m3 { margin-left: 11px; }
.m4 { margin-left: 8px; }
.m5 { margin-left: 6px; }
.vsep { width: 1px; height: 22px; background: #a9a9a9; margin-left: 10px; }
.help { width: 14px; height: 14px; margin-left: 9px; border: 1px solid #333; border-radius: 50%; background: #f3f5f9; color: #2255b5; font-weight: 700; font-size: 13px; line-height: 14px; text-align: center; }
.win { display: flex; width: 104px; height: 18px; margin-left: 16px; border: 1px solid #4d6a94; border-top: 0; border-radius: 0 0 5px 5px; background: linear-gradient(#a9c3e8, #7da0d2); box-sizing: border-box; }
.win span { flex: 1; display: flex; justify-content: center; align-items: center; border-right: 1px solid #6483ad; }
.win span:last-child { flex: 1.700; border: 0; }

.menu { height: 22px; flex: none; display: flex; align-items: center; padding-left: 55px; background: linear-gradient(#a2a2a2, #7a7a7a 50%, #5b5b5b); border-bottom: 1px solid #222; box-sizing: border-box; }
.menu span { flex: none; text-shadow: 0 1px 1px #333; }
.mdi { margin: 0 2px 0 auto; }
.tabs { height: 20px; flex: none; display: flex; align-items: center; background: #515151; border-bottom: 1px solid #2a2a2a; box-sizing: border-box; color: #d0d0d0; }
.tabs span { flex: none; }
.home { box-sizing: border-box; width: 51px; height: 19px; margin: 2px 10px 0 4px; padding-left: 8px; border: 1px solid #222; border-bottom: 0; background: linear-gradient(#797979, #5c5c5c); color: #fff; line-height: 15px; }
.pill { width: 14px; height: 8px; border-radius: 2px; background: linear-gradient(#fff 40%, #bbb); margin-right: 4px; position: relative; }
.pill::after { content: ''; position: absolute; left: 4px; top: 2px; border: 3px solid transparent; border-bottom: 4px solid #222; border-top: 0; }

.ribbon { height: 98px; flex: none; display: flex; padding-left: 2px; background: linear-gradient(#505050, #393939); border-bottom: 1px solid #777; box-sizing: border-box; }
.panel { flex: none; box-sizing: border-box; border-right: 1px solid #3a3a3a; border-bottom: 1px solid #222; background: #5c5c5c; box-shadow: inset 1px 0 #6a6a6a; display: flex; flex-direction: column; }
.body { height: 79px; display: flex; }
.big { flex: none; display: flex; flex-direction: column; align-items: center; padding-top: 6px; box-sizing: border-box; }
.big .lab { margin-top: 5px; line-height: 14px; }
.big .l2 { margin-top: 1px; }
.big .dn { margin-top: 3px; }
.bigA { font: 37px/32px 'Open Sans', sans-serif; height: 32px; color: #ddd; }
.cols { display: flex; }
.col { flex: none; padding-top: 4px; }
.row { height: 24px; display: flex; align-items: center; }
.row .txt { margin-left: 5px; }
.row .dn { margin-left: 8px; }
.fix .txt { width: 36px; }
.fix .dn { margin-left: 0; }
.row.on { margin: 1px -1px 0 -4px; padding-left: 3px; height: 20px; border: 1px solid #2c3e66; background: linear-gradient(#5f86c6, #7e9fd4); }
.layers { padding-top: 5px; }
.combo { box-sizing: border-box; height: 22px; display: flex; align-items: center; border: 1px solid #2c2c2c; background: linear-gradient(#5a5a5a, #6e6e6e); position: relative; }
.layers .combo { width: 209px; padding-left: 3px; gap: 4px; }
.layers .combo span { margin-left: -1px; }
.combo .wide { margin-left: auto; margin-right: 1px; }
.sw { width: 14px; height: 14px; background: #ff00ff; border: 1px solid #aaa; }
.sw.dark { width: 12px; height: 12px; border-color: #111; margin-left: 0; }
.lrow { height: 24px; display: flex; align-items: center; gap: 8px; padding-left: 5px; }
.lrow:nth-child(2) { margin-top: 1px; }
.lrow span { margin-left: -3px; }
.props { padding-top: 5px; display: flex; flex-direction: column; gap: 2px; }
.prow { display: flex; align-items: center; gap: 2px; padding-left: 2px; }
.prow .combo { width: 180px; }
.prow .sw { margin-left: 11px; }
.mg { margin-left: 10px; }
.thick { width: 59px; height: 3px; background: #fff; margin: 0 1px 0 8px; }
.thin { width: 64px; height: 1px; background: #fff; margin: 0 1px 0 3px; }
.ptitle { flex: 1; display: flex; align-items: center; justify-content: center; gap: 6px; background: linear-gradient(#4c4c4c, #525252); position: relative; margin: 0 1px; }
.dlg { margin: 3px 0 0 4px; }
.panel:nth-child(6) .dlg { position: absolute; right: 4px; top: 4px; }

.docs { height: 30px; flex: none; position: relative; display: flex; background: #363636; border-bottom: 4px solid #5c5c5c; box-sizing: border-box; padding-left: 31px; line-height: 31px; color: #b0b0b0; }
.shape { position: absolute; left: 0; top: 0; }
.docs span { position: relative; }
.d1 { width: 123px; }
.d2 { color: #fff; letter-spacing: -0.15px; }

.canvas { position: relative; height: 827px; flex: none; background: #212830; overflow: hidden; }
.red { fill: none; stroke: #e00505; stroke-width: 1.150; }
.bound { fill: none; stroke: #ff7f27; stroke-width: 4.600; }
.drawing { overflow: hidden; letter-spacing: 0; }
.zone { font: 15.500px 'DejaVu Sans', sans-serif; fill: #ff7f27; stroke: #ff7f27; stroke-width: .4; }
.lots text { font: 18.500px 'DejaVu Sans', sans-serif; stroke-width: .55; }
.ucs { font: 300 18px 'Open Sans', sans-serif; fill: #fff; }
.vp { font: 12px 'Open Sans', sans-serif; fill: #fff; }
.cube text { font: bold 21px 'Liberation Sans', sans-serif; fill: #bdbfc1; text-anchor: middle; }
.cube .top { font-size: 14px; fill: #454b55; }
.wcs { font: 11px 'Liberation Sans', sans-serif; fill: #4a4c5a; }
.edge { position: absolute; right: 0; top: 0; width: 6px; height: 100%; background: linear-gradient(#d6e4f4 0, #dbe8f7 11%, #b9d1ea 11%); border-right: 1px solid #111; box-shadow: inset -1px 0 #2fc3f0; border-left: 1px solid #b9d1ea; }
.cmd { position: absolute; left: 395px; top: 800px; width: 1131px; height: 27px; display: flex; align-items: center; background: rgba(255, 255, 255, .7); border: 1px solid #777; box-sizing: border-box; border-radius: 3px; overflow: hidden; }
.cmd span { font: italic 11.600px 'DejaVu Sans Mono', monospace; letter-spacing: 0; color: #6c6e72; margin-left: 5px; }
.grip { background: linear-gradient(#5a5a5a, #474747); height: 27px; }
.up { border: 4px solid transparent; border-bottom: 5px solid #222; border-top: 0; }
.cmd .up { margin: 0 3px 0 auto; }

.status { height: 29px; flex: none; display: flex; justify-content: space-between; background: #363636; border-top: 1px solid #666; box-sizing: border-box; }
.lay { position: relative; display: flex; padding-left: 23px; line-height: 17px; color: #bbb; }
.lay b, .lay span { position: relative; width: 57px; }
.lay span { width: 65px; letter-spacing: 0; }
.lay b { color: #fff; letter-spacing: -0.4px; }
.sb { display: flex; gap: 1px; color: #fff; }
.sb > div { box-sizing: border-box; height: 27px; background: #505050; border: 1px solid #858585; border-right-color: #6c6c6c; display: flex; align-items: center; letter-spacing: -0.2px; }
.sb .mod { width: 49px; justify-content: center; }
.sb .dn { border-width: 4px 3.500px 0; margin-left: 4px; }
.w26 { width: 25px; }
.w27 { width: 26px; }
.w41 { width: 41px; }
.w52 { width: 54px; }
.w64 { width: 63px; }
.w65 { width: 65px; }
.w103 { width: 102px; }
.w111 { width: 111px; }
.w165 { width: 164px; }

.taskbar { position: relative; height: 30px; flex: none; display: flex; }
.bg { position: absolute; left: 0; top: 0; overflow: hidden; }
.orb { position: absolute; left: 0; top: -4px; }
.tbtns { position: relative; display: flex; gap: 4px; padding-left: 60px; padding-top: 1px; }
.tbtns > div { width: 42px; height: 29px; box-sizing: border-box; display: flex; align-items: center; justify-content: center; }
.tbn { border: 1px solid #a9c0e0; border-radius: 3px; background: linear-gradient(160deg, #9db6db, #4c73ae 45%, #3a64a4); }
.tbn.act { background: linear-gradient(160deg, #f3f6fb, #a9bcdb 50%, #93abd2); }
.zalo { width: 16px; height: 16px; border-radius: 50%; background: #fff; color: #1168e8; font: 700 7px/16px 'Open Sans', sans-serif; text-align: center; letter-spacing: -0.3px; }
.acad { width: 16px; height: 17px; background: #f4dfd8; color: #b8181e; font: 900 17px/17px 'Open Sans', sans-serif; text-align: center; letter-spacing: 0; }
.tray { position: relative; margin-left: auto; display: flex; align-items: center; gap: 6px; color: #fff; }
.en { margin: -6px 8px 0 0; }
.up.w { border-bottom-color: #fff; margin-right: 6px; }
.ebox { width: 14px; height: 15px; background: #a9bfe8; color: #22409c; font: 700 12px/15px 'Open Sans', sans-serif; text-align: center; border: 1px solid #dfe8fa; margin-right: 2px; }
.clock { margin: 0 10px 0 14px; }
.peek { width: 12px; height: 28px; border: 1px solid #1b2c48; background: linear-gradient(90deg, #6f8cb5, #45658f); box-sizing: border-box; }
</style>
